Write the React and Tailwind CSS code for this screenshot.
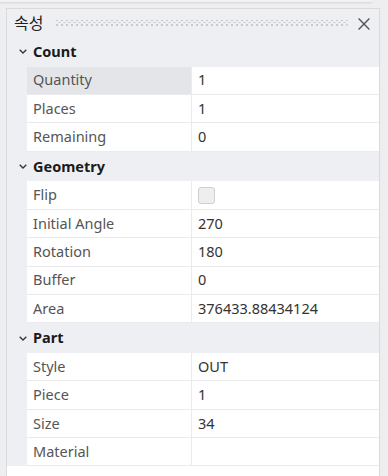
const sections = [
  {
    title: 'Count',
    rows: [
      { name: 'Quantity', value: '1', selected: true },
      { name: 'Places', value: '1' },
      { name: 'Remaining', value: '0' },
    ],
  },
  {
    title: 'Geometry',
    rows: [
      { name: 'Flip', checkbox: true },
      { name: 'Initial Angle', value: '270' },
      { name: 'Rotation', value: '180' },
      { name: 'Buffer', value: '0' },
      { name: 'Area', value: '376433.88434124' },
    ],
  },
  {
    title: 'Part',
    rows: [
      { name: 'Style', value: 'OUT' },
      { name: 'Piece', value: '1' },
      { name: 'Size', value: '34' },
      { name: 'Material', value: '' },
    ],
  },
];

function Grip() {
  return (
    <svg className="flex-1 h-[6px] ml-[13px] mr-[10px]" preserveAspectRatio="none">
      <defs>
        <pattern id="grip" width="5" height="5" patternUnits="userSpaceOnUse">
          <rect x="0" y="0" width="2" height="1" fill="#c8c9cc" />
          <rect x="2.5" y="2" width="2" height="1" fill="#c8c9cc" />
          <rect x="0" y="4" width="2" height="1" fill="#c8c9cc" />
        </pattern>
      </defs>
      <rect width="100%" height="100%" fill="url(#grip)" />
    </svg>
  );
}

function CloseIcon() {
  return (
    <svg width="12" height="12" viewBox="0 0 12 12" className="mt-[2px]">
      <path d="M0.6 0.6L11.4 11.4M11.4 0.6L0.6 11.4" stroke="#555" strokeWidth="1.4" fill="none" />
    </svg>
  );
}

function Chevron() {
  return (
    <svg width="8" height="5" viewBox="0 0 8 5" className="ml-[12px]">
      <polyline points="0.7,0.7 4,4 7.3,0.7" fill="none" stroke="#333" strokeWidth="1.3" />
    </svg>
  );
}

export default function App() {
  return (
    <div
      className="w-[388px] h-[476px] bg-[#eeeef1] overflow-hidden"
      style={{ fontFamily: '"Noto Sans", "Noto Sans CJK KR", sans-serif' }}
    >
      {/* shadow of the element above */}
      <div className="h-[2px] mr-[16px] bg-[#f2f2f4] shadow-[0_1px_2px_rgba(0,0,0,0.12)]" />

      <div className="mt-[6px] ml-[6px] w-[374px] border border-b-0 border-[#dadadd] bg-[#eeeff2]">
        {/* title bar */}
        <div className="h-[28px] flex items-center pl-[7px] pr-[9px]">
          <span className="text-[16px] text-[#1e1e1e] leading-none">속성</span>
          <Grip />
          <CloseIcon />
        </div>

        <div className="bg-white">
          {sections.map((sec) => (
            <div key={sec.title}>
              <div className="h-[29.6px] flex items-center bg-[#eeeff2]">
                <div className="w-[20px] flex items-center">
                  <Chevron />
                </div>
                <span className="pl-[6px] text-[14.5px] font-bold text-[#1a1a1a]">{sec.title}</span>
              </div>
              {sec.rows.map((row) => (
                <div key={row.name} className="h-[28.4px] flex">
                  <div className="w-[20px] bg-[#eeeff2]" />
                  <div
                    className={`w-[165px] flex items-center pl-[6px] border-b border-r border-[#ebebed] text-[14.5px] text-[#555] ${
                      row.selected ? 'bg-[#e4e5e8]' : ''
                    }`}
                  >
                    {row.name}
                  </div>
                  <div className="flex-1 flex items-center pl-[6px] border-b border-[#ebebed] text-[14.5px] text-[#333]">
                    {row.checkbox ? (
                      <div className="w-[17px] h-[17px] rounded-[3px] border border-[#cfd0d3] bg-[#eeeeef]" />
                    ) : (
                      row.value
                    )}
                  </div>
                </div>
              ))}
            </div>
          ))}
          <div className="h-[20px]" />
        </div>
      </div>
    </div>
  );
}
